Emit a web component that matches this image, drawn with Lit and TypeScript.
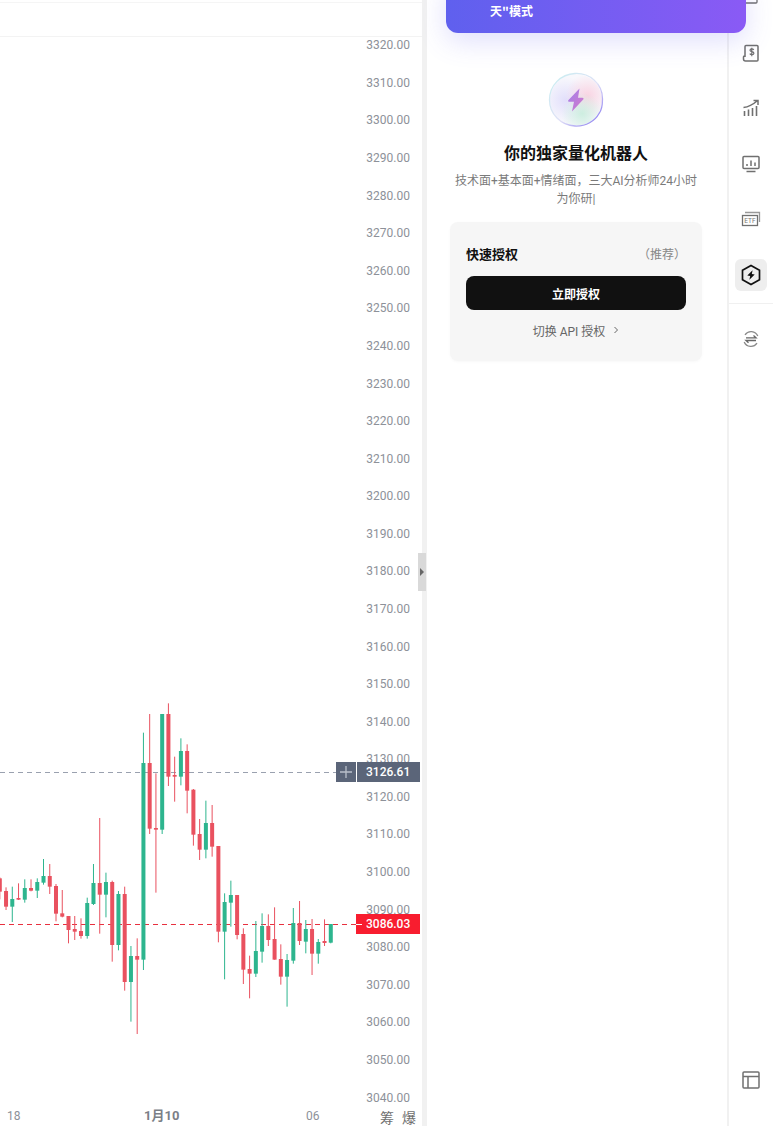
import { LitElement, html, css, svg } from "lit";
import { customElement } from "lit/decorators.js";

type C = [number, number, number, number, number];
// colour flag (1 green, 0 red), wick top, wick bottom, body top, body bottom: measured at 3x from y=690
const CANDLES: C[] = [
  [0,562,628,565,605],[0,592,660,603,650],[1,590,696,627,650],[0,580,630,624,629],[1,568,638,594,629],
  [0,568,604,594,602],[1,565,624,576,602],[1,507,584,558,578],[0,522,612,558,590],[0,582,694,588,671],
  [0,600,682,670,680],[0,678,760,678,720],[0,678,750,717,725],[0,685,746,723,738],[1,623,746,639,738],
  [1,522,645,579,642],[0,384,731,579,614],[1,548,682,576,614],[0,572,815,576,765],[1,603,781,612,765],
  [0,590,902,612,876],[1,768,995,798,876],[0,745,1032,798,809],[1,128,840,219,809],[0,72,432,219,416],
  [0,250,608,414,419],[1,72,432,72,419],[0,40,288,72,260],[0,200,335,255,260],[1,145,286,183,260],
  [0,163,370,183,302],[0,297,467,299,434],[0,387,510,432,479],[1,332,505,399,479],[0,345,500,399,470],
  [0,468,757,468,725],[1,610,868,636,725],[1,572,710,615,638],[0,615,748,615,735],[0,715,882,732,839],
  [0,797,925,837,851],[1,693,861,783,851],[1,670,818,708,785],[0,673,768,708,750],[0,652,809,747,809],
  [0,763,884,807,860],[1,792,950,810,860],[1,654,821,699,812],[0,633,765,699,753],[1,690,790,717,755],
  [0,687,855,717,791],[1,747,821,756,791],[0,688,768,753,759],[1,702,760,702,758],
];
const GREEN = "#2db58e";
const RED = "#e9515f";
const yOf = (v: number) => 690 + v / 3;
const AXIS = Array.from({ length: 29 }, (_, i) => 3320 - i * 10);

@customElement("app-root")
export class AppRoot extends LitElement {
  static styles = css`
    :host { display: block; width: 773px; height: 1126px; overflow: hidden; position: relative; background: #fff;
      font-family: Roboto, "Noto Sans CJK SC", sans-serif; }
    .layout { display: flex; height: 1126px; }
    .chart { flex: 0 0 422px; position: relative; height: 1126px; }
    .chart svg { display: block; }
    .axis { font: 12px Roboto, sans-serif; fill: #8d9199; }
    .tag { font: 500 12px Roboto, sans-serif; fill: #fff; }
    .time { font: 12px Roboto, "Noto Sans CJK SC", sans-serif; fill: #8d9199; }
    .time.b { font-weight: 700; font-size: 13px; fill: #7b7f87; }
    .tools { font: 14px "Noto Sans CJK SC", sans-serif; fill: #6f6f6f; }
    .split { flex: 0 0 5px; background: #f1f1f1; position: relative; }
    .handle { position: absolute; left: -4px; top: 553px; width: 8px; height: 38px; background: #d9d9d9;
      display: flex; align-items: center; justify-content: center; }
    .handle i { width: 0; height: 0; border-left: 4px solid #666; border-top: 4px solid transparent; border-bottom: 4px solid transparent; }
    .panel { flex: 0 0 300px; display: flex; flex-direction: column; align-items: center; padding: 72px 2px 0 0; box-sizing: border-box; }
    .banner { position: absolute; left: 446px; top: -20px; width: 300px; height: 53px; border-radius: 12px; box-sizing: border-box;
      background: linear-gradient(90deg, #5f60ee, #8a5af5); box-shadow: 0 8px 28px rgba(96, 88, 240, .2);
      color: #fff; font: 700 12px "Noto Sans CJK SC", sans-serif; padding: 22px 0 0 44px; line-height: 18px; z-index: 2; }
    .orb { display: block; width: 56px; height: 56px; }
    h2 { margin: 12px 0 0; font: 700 16px/24px "Noto Sans CJK SC", sans-serif; color: #111; }
    .sub { margin: 8px 0 0; width: 250px; text-align: center; font-size: 12px; line-height: 18px; color: #7a7a7a; }
    .card { width: 252px; box-sizing: border-box; margin-top: 14px; padding: 21px 16px 0; height: 139px; background: #f6f6f6;
      border-radius: 8px; box-shadow: 0 1px 3px rgba(0,0,0,.03); }
    .row { display: flex; justify-content: space-between; align-items: center; height: 20px; }
    .row b { font: 700 13px "Noto Sans CJK SC", sans-serif; color: #111; }
    .row span { font-size: 12px; color: #888; }
    .btn { margin-top: 13px; height: 34px; border-radius: 8px; background: #111; color: #fff; display: flex; align-items: center;
      justify-content: center; font: 700 12px "Noto Sans CJK SC", sans-serif; }
    .switch { margin-top: 11px; display: flex; justify-content: center; align-items: center; gap: 8px; height: 18px; font-size: 12px; color: #666; }
    .side { flex: 0 0 46px; border-left: 2px solid #f1f1f1; display: flex; flex-direction: column; align-items: center; box-sizing: border-box; padding-bottom: 30px; }
    .ico { width: 32px; height: 32px; display: flex; align-items: center; justify-content: center; flex: none; border-radius: 6px; margin-bottom: 23.5px; }
    .ico.first { margin-top: -19px; }
    .ico.on { background: #eeeeee; margin-bottom: 12px; }
    .rule { align-self: stretch; height: 1px; background: #f0f0f0; flex: none; margin-bottom: 19px; }
    .ico.last { margin-top: auto; margin-bottom: 0; }
    .ico svg { display: block; fill: none; stroke: #707070; stroke-width: 1.3; }
    .ico svg.hex { stroke: #111; stroke-width: 1.7; }
    .ico svg.thick { stroke-width: 1.5; }
    .etf { font: 6.5px Roboto, sans-serif; fill: #777; stroke: none; }
  `;

  private chart() {
    return html`<svg width="422" height="1126" viewBox="0 0 422 1126">
      <line x1="0" y1="2.5" x2="422" y2="2.5" stroke="#f5f5f5"/>
      <line x1="0" y1="36.5" x2="422" y2="36.5" stroke="#f3f3f3"/>
      ${AXIS.map((v, i) => svg`<text class="axis" x="410" y=${49.3 + i * 37.58} text-anchor="end">${v}.00</text>`)}
      <line x1="0" y1="772.5" x2="336" y2="772.5" stroke="#9aa1af" stroke-dasharray="5 4"/>
      <line x1="0" y1="924.5" x2="356" y2="924.5" stroke="#e8303f" stroke-dasharray="5 4"/>
      ${CANDLES.map((c, i) => {
        const x = -0.2 + i * 6.245;
        const col = c[0] ? GREEN : RED;
        const top = yOf(c[3]);
        return svg`<line x1=${x} x2=${x} y1=${yOf(c[1])} y2=${yOf(c[2])} stroke=${col} stroke-width="1"/>
          <rect x=${x - 2} y=${top} width="4" height=${Math.max(yOf(c[4]) - top, 1.5)} fill=${col}/>`;
      })}
      <rect x="336" y="762" width="20" height="20" fill="#5b6579"/>
      <path d="M346 766v12M340 772h12" stroke="#b9bfca" stroke-width="1.3"/>
      <rect x="357" y="762" width="63" height="20" fill="#5b6579"/>
      <text class="tag" x="366" y="776">3126.61</text>
      <rect x="356" y="914" width="64" height="20" fill="#f81d2f"/>
      <line x1="356" y1="924.5" x2="362" y2="924.5" stroke="#fff"/>
      <text class="tag" x="366" y="928">3086.03</text>
      <text class="time" x="7" y="1120">18</text>
      <text class="time b" x="144" y="1120">1月10</text>
      <text class="time" x="306" y="1120">06</text>
      <text class="tools" x="380" y="1123">筹</text>
      <text class="tools" x="402" y="1123">爆</text>
    </svg>`;
  }

  private orb() {
    return html`<svg class="orb" viewBox="0 0 56 56">
      <defs>
        <radialGradient id="a" cx=".72" cy=".42" r=".42"><stop offset="0" stop-color="#f9d3e2"/><stop offset="1" stop-color="#f9d3e2" stop-opacity="0"/></radialGradient>
        <radialGradient id="b" cx=".62" cy=".76" r=".4"><stop offset="0" stop-color="#cdeee0"/><stop offset="1" stop-color="#cdeee0" stop-opacity="0"/></radialGradient>
        <radialGradient id="c" cx=".3" cy=".5" r=".45"><stop offset="0" stop-color="#e2dffb"/><stop offset="1" stop-color="#e2dffb" stop-opacity="0"/></radialGradient>
        <linearGradient id="r" x1="0" y1="0" x2="1" y2="1"><stop offset="0" stop-color="#c6eff0"/><stop offset=".55" stop-color="#e0e0f6"/><stop offset="1" stop-color="#7d6cf0"/></linearGradient>
        <linearGradient id="z" x1="0" y1="0" x2="1" y2="1"><stop offset="0" stop-color="#9a78ea"/><stop offset="1" stop-color="#d56fc8"/></linearGradient>
      </defs>
      <circle cx="28" cy="28" r="26" fill="#f8f8fc"/>
      <circle cx="28" cy="28" r="26" fill="url(#c)"/>
      <circle cx="28" cy="28" r="26" fill="url(#a)"/>
      <circle cx="28" cy="28" r="26" fill="url(#b)"/>
      <path d="M27 1.500C41 .8 54.500 11 54.500 27c0 7-1.500 12-3.500 14.500C47 49 38 54.500 27 54 13 53.500 1.500 42 1.500 28 1.500 13 13 2.200 27 1.500Z" fill="none" stroke="url(#r)" stroke-width="1.300"/>
      <path d="M31.500 16.500 20.500 28c-.7.800-.3 1.800.8 1.800h4.700l-2 9.700 11.200-12c.7-.8.300-1.800-.8-1.800H30l1.500-9.200Z" fill="url(#z)" opacity=".92"/>
    </svg>`;
  }

  render() {
    return html`
      <div class="layout">
        <div class="chart">${this.chart()}</div>
        <div class="split"><div class="handle"><i></i></div></div>
        <div class="panel">
          ${this.orb()}
          <h2>你的独家量化机器人</h2>
          <p class="sub">技术面+基本面+情绪面，三大AI分析师24小时为你研|</p>
          <div class="card">
            <div class="row"><b>快速授权</b><span>（推荐）</span></div>
            <div class="btn">立即授权</div>
            <div class="switch">切换 API 授权
              <svg width="6" height="8" viewBox="0 0 6 8" fill="none" stroke="#666"><path d="M1.500 1 4.500 4l-3 3"/></svg>
            </div>
          </div>
        </div>
        <div class="side">
          <div class="ico first"><svg width="20" height="20" viewBox="0 0 20 20"><rect x="4" y="2" width="12" height="14" rx="1"/><path d="M7 8h6"/></svg></div>
          <div class="ico"><svg class="thick" width="20" height="20" viewBox="0 0 20 20"><path d="M4 14V3.500a1 1 0 0 1 1-1h11a1 1 0 0 1 1 1V17a1 1 0 0 1-1 1H4.500a2 2 0 0 1-2-2v-2a1.200 1.200 0 0 1 1.500-1"/><path d="M12.800 6.800c-.5-.7-1.100-1-2-1-1 0-1.800.5-1.800 1.400 0 2 3.900 1 3.900 3 0 .9-.8 1.500-2 1.500-1 0-1.700-.4-2.100-1.100M10.800 4.800v8.400" stroke-width="1.200"/></svg></div>
          <div class="ico"><svg class="thick" width="20" height="20" viewBox="0 0 20 20"><path d="M2.500 9.500c4.500-.5 9-2.500 13.500-6.500M12.500 2.500H17V7"/><path d="M3.500 13v5M7.500 11.500V18M11.500 10v8M15.500 8v10" stroke-width="1.600"/></svg></div>
          <div class="ico"><svg class="thick" width="20" height="20" viewBox="0 0 20 20"><rect x="2" y="2.500" width="16" height="12" rx="1"/><path d="M6 12v-2M10 12V6.500M14 12V8.500M5.500 17.500h9"/></svg></div>
          <div class="ico"><svg width="20" height="20" viewBox="0 0 20 20"><rect x="1.500" y="6.500" width="15" height="10"/><path d="M4 3.500h14.500V13" stroke="#999"/><text class="etf" x="3.300" y="14">ETF</text></svg></div>
          <div class="ico on"><svg class="hex" width="20" height="22" viewBox="0 0 20 22"><path d="M10 1.500 18.500 6.300v9.400L10 20.500 1.500 15.700V6.300Z"/><path d="M11.600 6.300 6.300 11.400l2.900.6-.8 3.700 5.300-5.100-2.900-.6Z" fill="#111" stroke="none"/></svg></div>
          <div class="rule"></div>
          <div class="ico"><svg width="18" height="18" viewBox="0 0 18 18" style="stroke:#8a8a8a"><path d="M15.800 6A7.300 7.300 0 0 0 3 4.800M2.200 12a7.300 7.300 0 0 0 12.800 1.200"/><path d="M4 7.800h10l-2.500-2.200M14 10.500H4l2.500 2.200" stroke="#666"/></svg></div>
          <div class="ico last"><svg width="20" height="20" viewBox="0 0 20 20" style="stroke-width:1.500"><rect x="2" y="2" width="16" height="16" rx="1"/><path d="M2 6.500h16M7 6.500V18"/></svg></div>
        </div>
      </div>
      <div class="banner">天"模式</div>
    `;
  }
}
